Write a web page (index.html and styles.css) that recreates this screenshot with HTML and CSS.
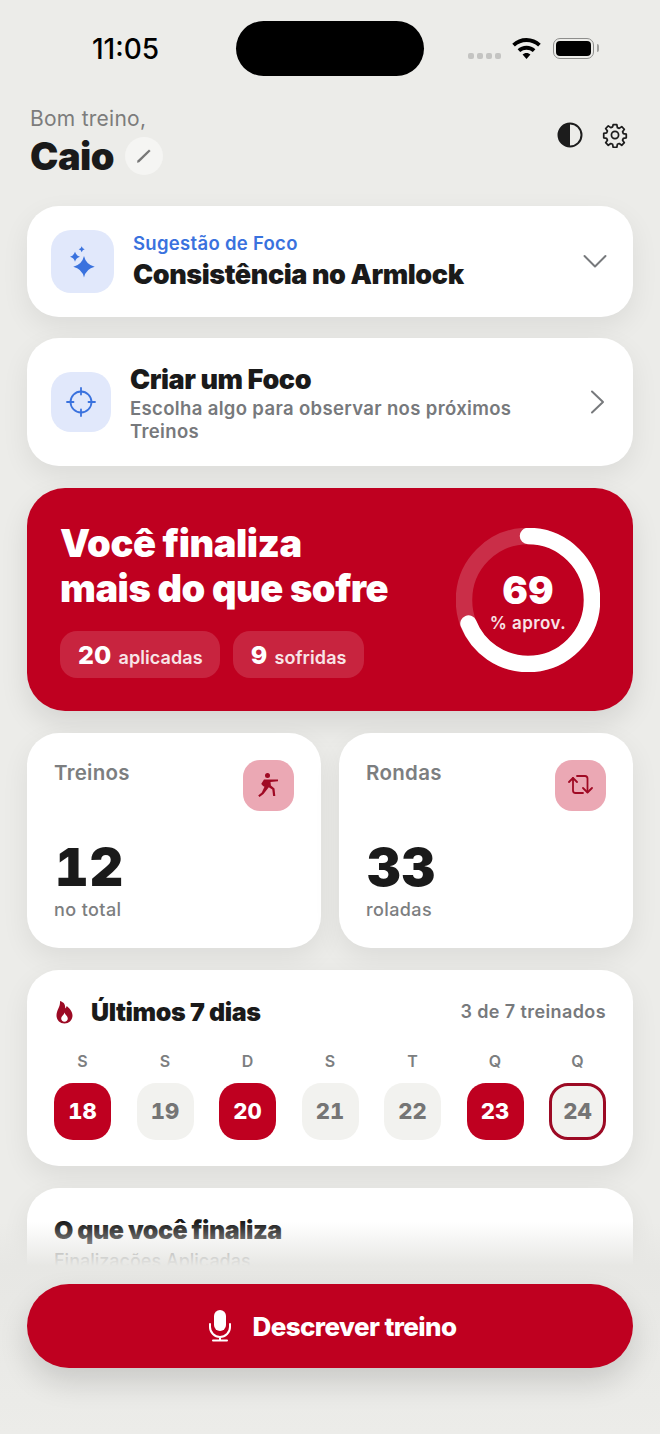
FILE: index.html
```html
<!DOCTYPE html>
<html lang="pt">
<head>
    <meta charset="UTF-8">
    <meta name="viewport" content="width=device-width, initial-scale=1.0">
    <title>Bom treino</title>
    <link rel="stylesheet" href="styles.css">
</head>
<body>
    <div class="screen">
        <!-- Barra de estado -->
        <div class="status-bar">
            <span class="time">11:05</span>
            <div class="island"></div>
            <div class="status-icons">
                <div class="signal"><i></i><i></i><i></i><i></i></div>
                <svg class="wifi" width="29" height="21" viewBox="2 2.500 24 17.700">
                    <path d="M14 2.500c4.600 0 8.800 1.800 12 4.800l-2.200 2.400A14.300 14.300 0 0 0 14 5.800 14.300 14.300 0 0 0 4.200 9.700L2 7.300a17.400 17.400 0 0 1 12-4.800z" fill="#000"/>
                    <path d="M14 9c2.900 0 5.500 1.100 7.500 3l-2.200 2.400A7.700 7.700 0 0 0 14 12.300a7.700 7.700 0 0 0-5.300 2.100L6.500 12c2-1.900 4.600-3 7.500-3z" fill="#000"/>
                    <path d="M14 15.200c1.300 0 2.500.5 3.300 1.300L14 20.200l-3.300-3.700c.8-.8 2-1.300 3.300-1.300z" fill="#000"/>
                </svg>
                <div class="battery"><div class="battery-fill"></div></div>
            </div>
        </div>

        <!-- Cabecalho -->
        <header class="top">
            <div>
                <p class="hello">Bom treino,</p>
                <div class="name-row">
                    <h1>Caio</h1>
                    <span class="edit">
                        <svg width="18" height="18" viewBox="0 0 18 18"><path d="M2 15.800l.5-2.300L14 2.500l1.600 1.500L4.200 15.200z" fill="#777"/></svg>
                    </span>
                </div>
            </div>
            <div class="top-actions">
                <svg width="26" height="26" viewBox="0 0 26 26">
                    <circle cx="13" cy="13" r="11.500" fill="none" stroke="#1c1c1c" stroke-width="2"/>
                    <path d="M13 1.500a11.500 11.500 0 0 0 0 23z" fill="#1c1c1c"/>
                </svg>
                <svg width="26" height="26" viewBox="0 0 24 24" fill="none" stroke="#1c1c1c" stroke-width="1.600" stroke-linejoin="round">
                    <path d="M10.300 2.500h3.400l.5 2.700 1.700.7 2.300-1.600 2.400 2.400-1.600 2.300.7 1.700 2.700.5v3.400l-2.700.5-.7 1.700 1.600 2.300-2.400 2.400-2.300-1.600-1.700.7-.5 2.700h-3.400l-.5-2.700-1.700-.7-2.300 1.600-2.400-2.400 1.600-2.300-.7-1.700-2.700-.5V10.500l2.700-.5.700-1.700-1.600-2.300 2.400-2.400 2.300 1.600 1.700-.7z"/>
                    <circle cx="12" cy="12" r="3.300"/>
                </svg>
            </div>
        </header>

        <main class="content">
            <section class="card focus-card suggestion">
                <div class="icon-box">
                    <svg width="30" height="34" viewBox="0 0 30 34" fill="#3a72de">
                        <path d="M16 12Q18 20.700 26.700 22.700 18 24.700 16 33.400 14 24.700 5.300 22.700 14 20.700 16 12z"/>
                        <path d="M7 7.700Q8 11.700 12 12.700 8 13.700 7 17.700 6 13.700 2 12.700 6 11.700 7 7.700z"/>
                        <path d="M13.700 2.300Q14.300 4.700 16.700 5.300 14.300 5.900 13.700 8.300 13.100 5.900 10.700 5.300 13.100 4.700 13.700 2.300z"/>
                    </svg>
                </div>
                <div class="focus-text">
                    <p class="eyebrow">Sugestão de Foco</p>
                    <h2>Consistência no Armlock</h2>
                </div>
                <svg class="chev" width="26" height="16" viewBox="0 0 26 16"><path d="M2.500 3 13 13.500 23.500 3" fill="none" stroke="#77797c" stroke-width="2" stroke-linecap="round" stroke-linejoin="round"/></svg>
            </section>

            <section class="card focus-card create">
                <div class="icon-box">
                    <svg width="30" height="30" viewBox="0 0 30 30" fill="none" stroke="#3a72de" stroke-width="1.800" stroke-linecap="round">
                        <circle cx="15" cy="15" r="10.500"/>
                        <path d="M15 1v6.500M15 22.500V29M1 15h6.500M22.500 15H29"/>
                    </svg>
                </div>
                <div class="focus-text">
                    <h2>Criar um Foco</h2>
                    <p class="sub">Escolha algo para observar nos próximos Treinos</p>
                </div>
                <svg class="chev" width="18" height="26" viewBox="0 0 18 26"><path d="M3 2.500 14 13 3 23.500" fill="none" stroke="#77797c" stroke-width="2" stroke-linecap="round" stroke-linejoin="round"/></svg>
            </section>

            <section class="hero">
                <div>
                    <h2>Você finaliza<br>mais do que sofre</h2>
                    <div class="pills">
                        <span class="pill"><b>20</b> aplicadas</span>
                        <span class="pill"><b>9</b> sofridas</span>
                    </div>
                </div>
                <div class="ring">
                    <svg width="144" height="144" viewBox="0 0 144 144">
                        <circle cx="72" cy="72" r="64" fill="none" stroke="rgba(255,255,255,.18)" stroke-width="16.500"/>
                        <circle cx="72" cy="72" r="64" fill="none" stroke="#fff" stroke-width="16.500" stroke-linecap="round" pathLength="100" stroke-dasharray="69 100" transform="rotate(-90 72 72)"/>
                    </svg>
                    <div class="ring-label">
                        <strong>69</strong>
                        <span>% aprov.</span>
                    </div>
                </div>
            </section>

            <div class="stats">
                <section class="card stat">
                    <div class="stat-top">
                        <span class="stat-title">Treinos</span>
                        <span class="stat-icon">
                            <svg width="24" height="26" viewBox="0 0 24 26" fill="#a00a24">
                                <circle cx="10.500" cy="3.500" r="2.500"/>
                                <path d="M7 7.500h4.500L21 7.500v1.800l-7.500.6.400 3.700 3.600 2.900.8 7.500h-2.200l-.8-6.400-3.500-2.400L6.500 22l-4 3-1.300-1.500 3.600-3 2.700-5.800c-1.500-.6-2.500-1.600-3.200-3z"/>
                            </svg>
                        </span>
                    </div>
                    <strong class="stat-value">12</strong>
                    <span class="stat-note">no total</span>
                </section>
                <section class="card stat">
                    <div class="stat-top">
                        <span class="stat-title">Rondas</span>
                        <span class="stat-icon">
                            <svg width="25" height="20" viewBox="0 0 25 20" fill="none" stroke="#a00a24" stroke-width="1.800" stroke-linecap="round" stroke-linejoin="round">
                                <path d="M5 3v12.500Q5 18 7.500 18H15"/>
                                <path d="M1 7l4-4 4 4"/>
                                <path d="M19.500 17V3.500Q19.500 1 17 1H9"/>
                                <path d="M15 13l4.500 4.500L24 13"/>
                            </svg>
                        </span>
                    </div>
                    <strong class="stat-value">33</strong>
                    <span class="stat-note">roladas</span>
                </section>
            </div>

            <section class="card week">
                <div class="week-head">
                    <svg width="22" height="24" viewBox="0 0 22 24">
                        <path fill-rule="evenodd" fill="#9c0a24" d="M6 1c5 1.500 5.500 5 5 7.500.8-.4 1.500-1.300 1.700-2.500 3 2.500 5.800 5.500 5.800 9.500 0 4.800-3.600 8-8 8s-8-3.200-8-8C2.500 10 6.500 7 6 1zM10.500 12.500c-.2 2.500-3.300 3.500-3.300 6 0 1.900 1.400 3.200 3.300 3.200s3.300-1.300 3.300-3.200c0-2.500-2.800-3.500-3.300-6z"/>
                    </svg>
                    <h3>Últimos 7 dias</h3>
                    <span class="week-count">3 de 7 treinados</span>
                </div>
                <div class="days" id="days"></div>
            </section>

            <section class="card finishes">
                <h3>O que você finaliza</h3>
                <p>Finalizações Aplicadas</p>
            </section>
        </main>

        <!-- Botao fixo -->
        <div class="fade"></div>
        <button class="cta">
            <svg width="24" height="32" viewBox="0 0 24 32" fill="none" stroke="#fff" stroke-width="2" stroke-linecap="round">
                <rect x="6" y="0" width="12" height="21" rx="6" fill="#fff" stroke="none"/>
                <path d="M2 14v3a10 10 0 0 0 20 0v-3M12 27v3.500M5 30.500h14"/>
            </svg>
            Descrever treino
        </button>
    </div>

    <script>
        const days = [
            { letra: "S", dia: 18, on: true },
            { letra: "S", dia: 19 },
            { letra: "D", dia: 20, on: true },
            { letra: "S", dia: 21 },
            { letra: "T", dia: 22 },
            { letra: "Q", dia: 23, on: true },
            { letra: "Q", dia: 24, today: true }
        ];
        const daysEl = document.getElementById("days");
        days.forEach(d => {
            const col = document.createElement("div");
            col.className = "day";
            const cls = d.on ? "num on" : d.today ? "num today" : "num";
            col.innerHTML = `<span class="letter">${d.letra}</span><span class="${cls}">${d.dia}</span>`;
            daysEl.appendChild(col);
        });
    </script>
</body>
</html>
```

FILE: styles.css
```css
* {
    box-sizing: border-box;
}

body {
    margin: 0;
    font-family: Inter, "Liberation Sans", sans-serif;
    background-color: #ecece9;
    color: #1a1a1a;
}

h1, h2, h3, p {
    margin: 0;
}

.screen {
    position: relative;
    width: 660px;
    height: 1434px;
    overflow: hidden;
}

/* status bar */
.status-bar {
    height: 97px;
    padding: 21px 60px 0 92px;
    display: flex;
    align-items: flex-start;
}

.time {
    width: 144px;
    margin-top: 11px;
    font-size: 28px;
    line-height: 34px;
    font-weight: 500;
    color: #000;
}

.island {
    width: 188px;
    height: 55px;
    border-radius: 28px;
    background-color: #000;
}

.status-icons {
    margin-left: 44px;
    margin-top: 17px;
    display: flex;
    align-items: flex-start;
}

.signal {
    display: flex;
    gap: 3px;
    margin-top: 15px;
    margin-right: 11px;
}

.signal i {
    width: 6px;
    height: 6px;
    border-radius: 2px;
    background-color: #c4c4c2;
}

.battery {
    position: relative;
    width: 41px;
    height: 21px;
    margin-left: 12px;
    padding: 2px;
    border: 1.500px solid #8e8e8c;
    border-radius: 7px;
}

.battery::after {
    content: "";
    position: absolute;
    right: -6px;
    top: 5px;
    width: 2.500px;
    height: 8px;
    border-radius: 0 2px 2px 0;
    background-color: #a0a09e;
}

.battery-fill {
    height: 100%;
    border-radius: 4px;
    background-color: #000;
}

/* header */
.top {
    padding: 8px 32px 0 30px;
    height: 109px;
    display: flex;
    justify-content: space-between;
    align-items: flex-start;
}

.hello {
    font-size: 21px;
    line-height: 27px;
    letter-spacing: 0.25px;
    color: #7c7c7c;
}

.name-row {
    display: flex;
    align-items: center;
    gap: 11px;
    margin-top: 1px;
}

h1 {
    font-size: 38px;
    line-height: 46px;
    font-weight: 900;
    letter-spacing: -0.5px;
}

.edit {
    width: 38px;
    height: 38px;
    border-radius: 50%;
    background-color: #f5f5f3;
    display: flex;
    align-items: center;
    justify-content: center;
}

.top-actions {
    display: flex;
    gap: 19px;
    margin-top: 17px;
}

/* cards */
.content {
    padding: 0 27px;
    display: flex;
    flex-direction: column;
    gap: 21.600px;
}

.card {
    background-color: #fff;
    border-radius: 32px;
    box-shadow: 0 10px 28px rgba(0, 0, 0, 0.07);
}

.focus-card {
    display: flex;
    align-items: center;
    padding: 0 25px 0 24px;
}

.suggestion {
    height: 110.800px;
}

.create {
    height: 128px;
    padding-right: 26px;
}

.icon-box {
    flex: none;
    width: 63px;
    height: 63px;
    border-radius: 20px;
    background-color: #e1e8fb;
    display: flex;
    align-items: center;
    justify-content: center;
}

.create .icon-box {
    width: 60px;
    height: 60px;
}

.focus-text {
    flex: 1;
    margin-left: 19px;
}

.create .focus-text {
    padding-right: 50px;
}

.eyebrow {
    font-size: 18.500px;
    line-height: 24px;
    font-weight: 600;
    letter-spacing: 0.3px;
    color: #3a72de;
}

.focus-card h2 {
    font-size: 27px;
    line-height: 35px;
    font-weight: 900;
    letter-spacing: -0.43px;
}

.suggestion h2 {
    margin-top: 2px;
}

.sub {
    font-size: 18.500px;
    line-height: 23px;
    font-weight: 600;
    letter-spacing: 0.35px;
    color: #77797c;
}

.chev {
    flex: none;
}

/* hero */
.hero {
    height: 223px;
    padding: 0 33px;
    border-radius: 38px;
    background-color: #bf0020;
    color: #fff;
    display: flex;
    justify-content: space-between;
    align-items: center;
    box-shadow: 0 12px 28px rgba(0, 0, 0, 0.1);
}

.hero h2 {
    font-size: 38px;
    line-height: 45px;
    font-weight: 900;
    letter-spacing: -0.45px;
}

.pills {
    display: flex;
    gap: 13px;
    margin-top: 20px;
}

.pill {
    height: 47px;
    padding: 0 17px 0 18px;
    border-radius: 17px;
    background-color: rgba(255, 255, 255, 0.14);
    display: flex;
    align-items: baseline;
    gap: 7px;
    line-height: 49px;
    font-size: 18px;
    font-weight: 600;
    letter-spacing: 0.1px;
    color: #f8e4e7;
}

.pill b {
    font-size: 25px;
    font-weight: 800;
    color: #fff;
}

.ring {
    position: relative;
    width: 144px;
    height: 144px;
    margin-top: 1px;
    flex: none;
}

.ring-label {
    position: absolute;
    inset: 0;
    padding-top: 5px;
    display: flex;
    flex-direction: column;
    align-items: center;
    justify-content: center;
}

.ring-label strong {
    font-size: 38px;
    line-height: 38px;
    font-weight: 900;
}

.ring-label span {
    margin-top: 3px;
    font-size: 17px;
    line-height: 22px;
    font-weight: 600;
    letter-spacing: 0.45px;
    color: #f8e4e7;
}

/* stats */
.stats {
    display: grid;
    grid-template-columns: 294px 294px;
    gap: 18px;
}

.stat {
    height: 215.600px;
    padding: 27px 27px 26px;
    display: flex;
    flex-direction: column;
}

.stat-top {
    display: flex;
    justify-content: space-between;
    align-items: flex-start;
    height: 84px;
}

.stat-title {
    font-size: 20.500px;
    line-height: 26px;
    font-weight: 600;
    letter-spacing: 0.3px;
    color: #7c7e80;
}

.stat-icon {
    width: 51px;
    height: 51px;
    border-radius: 17px;
    background-color: #eba8b4;
    display: flex;
    align-items: center;
    justify-content: center;
}

.stat-value {
    margin-left: 1px;
    font-size: 52px;
    line-height: 58px;
    font-weight: 900;
    letter-spacing: 1px;
    font-variant-numeric: tabular-nums;
}

.stat-note {
    margin-top: 1px;
    font-size: 18px;
    line-height: 24px;
    font-weight: 500;
    letter-spacing: 0.4px;
    color: #7c7e80;
}

/* week */
.week {
    height: 196.600px;
    padding: 26px 27px 0;
}

.week-head {
    display: flex;
    align-items: center;
    height: 32px;
}

.week-head h3 {
    margin-left: 15px;
    font-size: 25px;
    font-weight: 900;
    letter-spacing: -0.4px;
}

.week-count {
    margin-left: auto;
    font-size: 18px;
    font-weight: 600;
    letter-spacing: 0.4px;
    color: #77797c;
}

.days {
    display: flex;
    justify-content: space-between;
    margin-top: 23px;
}

.day {
    display: flex;
    flex-direction: column;
    align-items: center;
    gap: 12px;
}

.letter {
    font-size: 16px;
    line-height: 20px;
    font-weight: 600;
    color: #7c7e80;
}

.num {
    width: 57px;
    height: 57px;
    border-radius: 19px;
    background-color: #f2f2ef;
    display: flex;
    align-items: center;
    justify-content: center;
    font-size: 22px;
    font-weight: 800;
    font-variant-numeric: tabular-nums;
    color: #757575;
}

.num.on {
    background-color: #bf0020;
    color: #fff;
}

.num.today {
    border: 3px solid #9c0a24;
}

/* partly hidden card */
.finishes {
    height: 200px;
    padding: 26px 27px;
}

.finishes h3 {
    font-size: 25px;
    line-height: 33px;
    font-weight: 900;
    letter-spacing: -0.5px;
}

.finishes p {
    margin-top: 2px;
    font-size: 18px;
    line-height: 24px;
    font-weight: 500;
    color: #7c7e80;
}

/* bottom */
.fade {
    position: absolute;
    left: 0;
    right: 0;
    top: 1222px;
    bottom: 0;
    background: linear-gradient(to bottom, rgba(232, 232, 229, 0) 0, #e7e7e4 44px, #ecece9 100%);
}

.cta {
    position: absolute;
    left: 27px;
    top: 1284px;
    width: 606px;
    height: 84px;
    padding-left: 11px;
    border: none;
    border-radius: 42px;
    background-color: #bf0020;
    color: #fff;
    font-family: inherit;
    font-size: 26px;
    font-weight: 800;
    letter-spacing: -0.6px;
    display: flex;
    align-items: center;
    justify-content: center;
    gap: 20px;
    box-shadow: 0 14px 30px rgba(0, 0, 0, 0.14);
}
```
